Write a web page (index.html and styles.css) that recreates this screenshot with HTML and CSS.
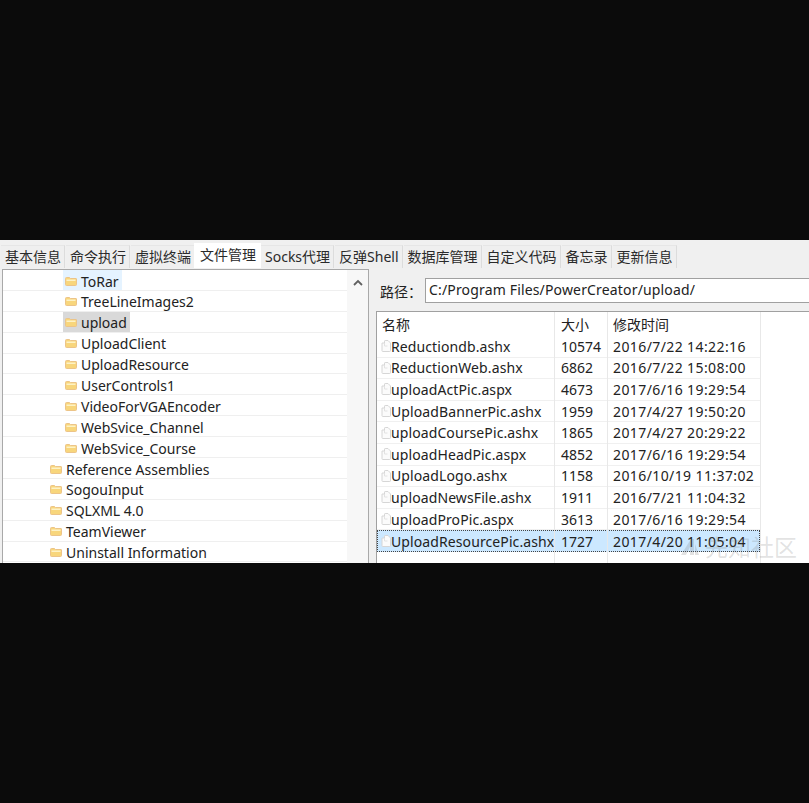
FILE: index.html
```html
<!DOCTYPE html>
<html lang="zh">
<head>
<meta charset="utf-8">
<title>文件管理</title>
<link rel="stylesheet" href="styles.css">
</head>
<body>
<svg class="defs" width="0" height="0" aria-hidden="true">
  <defs>
    <symbol id="folder" viewBox="0 0 12 9">
      <path d="M0.5 1.5 Q0.5 0.5 1.5 0.5 H4.5 L5.5 1.5 H11 Q11.5 1.5 11.5 2 V7.5 Q11.5 8.5 10.5 8.5 H1.5 Q0.5 8.5 0.5 7.5 Z" fill="#f8d67c" stroke="#ecc488" stroke-width="1"/>
      <rect x="1.5" y="2.5" width="9" height="1.5" fill="#fdf2c6"/>
    </symbol>
    <symbol id="file" viewBox="0 0 10 12">
      <path d="M1 3 H3.5 V1.2 Q3.5 0.5 4.2 0.5 H7 L9.5 3 V10.8 Q9.5 11.5 8.8 11.5 H1.7 Q1 11.5 1 10.8 Z" fill="#fbfbfb" stroke="#d6d6d6" stroke-width="1"/>
      <path d="M3.5 3 V6 H6.5" fill="none" stroke="#e2e2e2" stroke-width="1"/>
    </symbol>
  </defs>
</svg>
<main class="window">
  <nav class="tabs">
    <span class="tab">基本信息</span>
    <span class="tab">命令执行</span>
    <span class="tab">虚拟终端</span>
    <span class="tab active">文件管理</span>
    <span class="tab">Socks代理</span>
    <span class="tab">反弹Shell</span>
    <span class="tab">数据库管理</span>
    <span class="tab">自定义代码</span>
    <span class="tab">备忘录</span>
    <span class="tab">更新信息</span>
  </nav>
  <div class="content">
    <section class="tree-pane">
      <ul class="tree">
        <li class="node deep"><span class="item hover"><svg class="folder"><use href="#folder"/></svg>ToRar</span></li>
        <li class="node deep"><span class="item"><svg class="folder"><use href="#folder"/></svg>TreeLineImages2</span></li>
        <li class="node deep"><span class="item selected"><svg class="folder"><use href="#folder"/></svg>upload</span></li>
        <li class="node deep"><span class="item"><svg class="folder"><use href="#folder"/></svg>UploadClient</span></li>
        <li class="node deep"><span class="item"><svg class="folder"><use href="#folder"/></svg>UploadResource</span></li>
        <li class="node deep"><span class="item"><svg class="folder"><use href="#folder"/></svg>UserControls1</span></li>
        <li class="node deep"><span class="item"><svg class="folder"><use href="#folder"/></svg>VideoForVGAEncoder</span></li>
        <li class="node deep"><span class="item"><svg class="folder"><use href="#folder"/></svg>WebSvice_Channel</span></li>
        <li class="node deep"><span class="item"><svg class="folder"><use href="#folder"/></svg>WebSvice_Course</span></li>
        <li class="node"><span class="item"><svg class="folder"><use href="#folder"/></svg>Reference Assemblies</span></li>
        <li class="node"><span class="item"><svg class="folder"><use href="#folder"/></svg>SogouInput</span></li>
        <li class="node"><span class="item"><svg class="folder"><use href="#folder"/></svg>SQLXML 4.0</span></li>
        <li class="node"><span class="item"><svg class="folder"><use href="#folder"/></svg>TeamViewer</span></li>
        <li class="node"><span class="item"><svg class="folder"><use href="#folder"/></svg>Uninstall Information</span></li>
      </ul>
      <div class="scrollbar">
        <svg class="chevron" viewBox="0 0 10 7"><path d="M1 6 L5 2 L9 6" fill="none" stroke="#606060" stroke-width="1.8"/></svg>
      </div>
    </section>
    <section class="file-pane">
      <div class="path-row">
        <label class="path-label">路径：</label>
        <div class="path-input">C:/Program Files/PowerCreator/upload/</div>
      </div>
      <div class="list">
        <div class="row head">
          <span class="cell name">名称</span><span class="cell size">大小</span><span class="cell time">修改时间</span>
        </div>
        <div class="row"><span class="cell name"><svg class="file"><use href="#file"/></svg>Reductiondb.ashx</span><span class="cell size">10574</span><span class="cell time">2016/7/22 14:22:16</span></div>
        <div class="row"><span class="cell name"><svg class="file"><use href="#file"/></svg>ReductionWeb.ashx</span><span class="cell size">6862</span><span class="cell time">2016/7/22 15:08:00</span></div>
        <div class="row"><span class="cell name"><svg class="file"><use href="#file"/></svg>uploadActPic.aspx</span><span class="cell size">4673</span><span class="cell time">2017/6/16 19:29:54</span></div>
        <div class="row"><span class="cell name"><svg class="file"><use href="#file"/></svg>UploadBannerPic.ashx</span><span class="cell size">1959</span><span class="cell time">2017/4/27 19:50:20</span></div>
        <div class="row"><span class="cell name"><svg class="file"><use href="#file"/></svg>uploadCoursePic.ashx</span><span class="cell size">1865</span><span class="cell time">2017/4/27 20:29:22</span></div>
        <div class="row"><span class="cell name"><svg class="file"><use href="#file"/></svg>uploadHeadPic.aspx</span><span class="cell size">4852</span><span class="cell time">2017/6/16 19:29:54</span></div>
        <div class="row"><span class="cell name"><svg class="file"><use href="#file"/></svg>UploadLogo.ashx</span><span class="cell size">1158</span><span class="cell time">2016/10/19 11:37:02</span></div>
        <div class="row"><span class="cell name"><svg class="file"><use href="#file"/></svg>uploadNewsFile.ashx</span><span class="cell size">1911</span><span class="cell time">2016/7/21 11:04:32</span></div>
        <div class="row"><span class="cell name"><svg class="file"><use href="#file"/></svg>uploadProPic.aspx</span><span class="cell size">3613</span><span class="cell time">2017/6/16 19:29:54</span></div>
        <div class="row current"><span class="cell name"><svg class="file"><use href="#file"/></svg>UploadResourcePic.ashx</span><span class="cell size">1727</span><span class="cell time">2017/4/20 11:05:04</span></div>
        <div class="col-lines"><i></i><i></i><i></i></div>
      </div>
    </section>
  </div>
  <div class="watermark">
    <svg class="wm-logo" viewBox="0 0 20 18"><path d="M1 17 L11 1 H14 V17 H10 V9 L6 17 Z M15 6 L19 17 H15 Z" fill="currentColor"/></svg>
    <span>先知社区</span>
  </div>
</main>
</body>
</html>
```
FILE: styles.css
```css
* { box-sizing: border-box; }
html, body { margin: 0; padding: 0; }
body {
  background: #0b0b0b;
  height: 803px;
  overflow: hidden;
  padding-top: 240px;
  font-family: "Noto Sans", "Noto Sans CJK SC", sans-serif;
  font-size: 14px;
  color: #222;
}
.defs { position: absolute; }
.window {
  position: relative;
  height: 323px;
  background: #f0f0f0;
  overflow: hidden;
  display: flex;
  flex-direction: column;
}
.tabs {
  display: flex;
  height: 29px;
  padding: 5px 0 0 1px;
  flex: none;
}
.tab {
  height: 23px;
  padding: 0 3px 0 4px;
  margin-right: 1px;
  background: #efefef;
  border-right: 1px solid #dcdcdc;
  border-top: 1px solid #e6e6e6;
  line-height: 22px;
  white-space: nowrap;
  color: #2a2a2a;
}
.tab.active {
  background: #fff;
  height: 25px;
  margin: -2px 0 0 -2px;
  padding: 0 5px 0 6px;
  border: 0;
  line-height: 24px;
}
.content {
  flex: 1;
  display: flex;
  min-height: 0;
}
.tree-pane {
  width: 367px;
  flex: none;
  margin-left: 2px;
  display: flex;
  background: #fff;
  border-left: 1px solid #a9a9a9;
  border-top: 1px solid #a9a9a9;
  border-right: 1px solid #a9a9a9;
  overflow: hidden;
}
.tree {
  list-style: none;
  margin: 0;
  padding: 0;
  width: 344px;
  flex: none;
}
.node {
  height: 20.9px;
  border-bottom: 1px solid #efefef;
  padding-left: 45px;
  display: flex;
}
.node.deep { padding-left: 60px; }
.item {
  display: flex;
  align-items: center;
  height: 20px;
  padding: 2px 3px 0 2px;
  font-size: 14px;
  white-space: nowrap;
}
.item.hover { background: #e5f3ff; }
.item.selected { background: #d9d9d9; }
.folder {
  width: 12px;
  height: 9px;
  margin-right: 4px;
  flex: none;
}
.scrollbar {
  flex: 1;
  background: #f7f7f7;
  display: flex;
  justify-content: center;
  align-items: flex-start;
  padding-top: 9px;
}
.chevron { width: 10px; height: 7px; }
.file-pane {
  flex: 1;
  min-width: 0;
  display: flex;
  flex-direction: column;
  padding-left: 7px;
}
.path-row {
  display: flex;
  align-items: center;
  height: 42px;
  padding: 1px 0 0 4px;
  flex: none;
}
.path-label { width: 45px; flex: none; font-size: 14px; }
.path-input {
  flex: 1;
  height: 25px;
  background: #fff;
  border: 1px solid #a0a0a0;
  padding-left: 3px;
  line-height: 22px;
  font-size: 14px;
  letter-spacing: 0.16px;
  white-space: nowrap;
  margin-right: -2px;
}
.list {
  flex: 1;
  position: relative;
  background: #fff;
  border: 1px solid #a0a0a0;
  border-bottom: 0;
  margin-right: -2px;
  overflow: hidden;
}
.row {
  display: flex;
  width: 383px;
  height: 21.6px;
  align-items: center;
  border-bottom: 1px solid #f0f0f0;
  font-size: 14px;
  white-space: nowrap;
}
.row.head { height: 24px; width: 100%; border-bottom: 0; font-size: 14px; }
.row.current {
  background: #cce8ff;
  border: 1px dotted #444;
}
.cell { display: flex; align-items: center; flex: none; }
.name { width: 177px; padding-left: 5px; letter-spacing: 0.1px; }
.size { width: 53px; padding-left: 7px; }
.time { width: 153px; padding-left: 6px; letter-spacing: 0.4px; }
.head .cell { letter-spacing: 0; }
.row.current .name { width: 176px; padding-left: 4px; }
.file { width: 10px; height: 12px; margin-left: -1px; flex: none; }
.col-lines {
  position: absolute;
  inset: 0 auto 0 0;
  pointer-events: none;
}
.col-lines i {
  position: absolute;
  top: 0;
  bottom: 0;
  width: 1px;
  background: #e8e8e8;
}
.col-lines i:nth-child(1) { left: 177px; }
.col-lines i:nth-child(2) { left: 230px; }
.col-lines i:nth-child(3) { left: 383px; }
.watermark {
  position: absolute;
  left: 680px;
  bottom: 3px;
  display: flex;
  align-items: center;
  gap: 5px;
  font-size: 23px;
  line-height: 26px;
  color: rgba(110, 110, 110, 0.2);
  white-space: nowrap;
}
.wm-logo { width: 20px; height: 18px; flex: none; }
```
